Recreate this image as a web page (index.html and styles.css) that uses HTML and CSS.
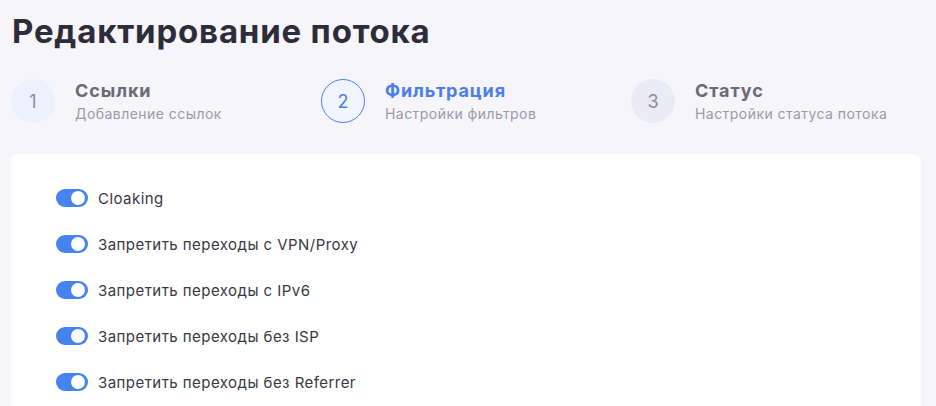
FILE: index.html
```html
<!DOCTYPE html>
<html lang="ru">
<head>
    <meta charset="UTF-8">
    <meta name="viewport" content="width=device-width, initial-scale=1.0">
    <title>Редактирование потока</title>
    <link rel="stylesheet" href="styles.css">
</head>
<body>
    <main class="page">
        <h1 class="page-title">Редактирование потока</h1>

        <div class="steps">
            <div class="step">
                <div class="step-num">1</div>
                <div class="step-text">
                    <div class="step-title">Ссылки</div>
                    <div class="step-sub">Добавление ссылок</div>
                </div>
            </div>
            <div class="step step-active">
                <div class="step-num">2</div>
                <div class="step-text">
                    <div class="step-title">Фильтрация</div>
                    <div class="step-sub">Настройки фильтров</div>
                </div>
            </div>
            <div class="step step-next">
                <div class="step-num">3</div>
                <div class="step-text">
                    <div class="step-title">Статус</div>
                    <div class="step-sub">Настройки статуса потока</div>
                </div>
            </div>
        </div>

        <section class="card">
            <label class="switch-row">
                <span class="switch"><span class="knob"></span></span>
                <span class="switch-label">Cloaking</span>
            </label>
            <label class="switch-row">
                <span class="switch"><span class="knob"></span></span>
                <span class="switch-label">Запретить переходы с VPN/Proxy</span>
            </label>
            <label class="switch-row">
                <span class="switch"><span class="knob"></span></span>
                <span class="switch-label">Запретить переходы с IPv6</span>
            </label>
            <label class="switch-row">
                <span class="switch"><span class="knob"></span></span>
                <span class="switch-label">Запретить переходы без ISP</span>
            </label>
            <label class="switch-row">
                <span class="switch"><span class="knob"></span></span>
                <span class="switch-label">Запретить переходы без Referrer</span>
            </label>
        </section>
    </main>
</body>
</html>
```

FILE: styles.css
```css
body {
    margin: 0;
    padding: 0;
    height: 406px;
    background-color: #f5f5fa;
    color: #35323f;
    font-family: Inter, "Noto Sans", sans-serif;
    overflow: hidden;
}
.page {
    padding: 0 15px 0 11px;
}
.page-title {
    margin: 0;
    padding: 11px 0 0 1px;
    font-size: 33px;
    font-weight: 700;
    line-height: 40px;
    color: #2f2c3a;
    letter-spacing: 0.8px;
}
.steps {
    display: grid;
    grid-template-columns: 310px 310px 310px;
    margin-top: 28px;
}
.step {
    display: flex;
    align-items: center;
    gap: 20px;
}
.step-num {
    width: 44px;
    height: 44px;
    border-radius: 50%;
    background-color: #ebf1fd;
    color: #8c8c99;
    font-size: 18px;
    display: flex;
    align-items: center;
    justify-content: center;
    box-sizing: border-box;
}
.step-title {
    font-size: 18px;
    font-weight: 700;
    color: #6c6a77;
    line-height: 22px;
    letter-spacing: 0.9px;
}
.step-sub {
    font-size: 14px;
    color: #9c9aa7;
    margin-top: 3px;
    line-height: 18px;
    letter-spacing: 0.45px;
}
.step-active .step-num {
    background-color: #f1f5ff;
    border: 1px solid #4a84f0;
    color: #4a7ded;
}
.step-active .step-title {
    color: #4a7ded;
}
.step-next .step-num {
    background-color: #ebebf5;
}
.card {
    margin-top: 31px;
    background: white;
    border-radius: 6px;
    padding: 35px 45px 0;
    height: 290px;
    box-sizing: border-box;
}
.switch-row {
    display: flex;
    align-items: center;
    gap: 10px;
    height: 18px;
    margin-bottom: 28px;
}
.switch {
    width: 32px;
    height: 18px;
    border-radius: 9px;
    background-color: #4583ee;
    position: relative;
    flex: none;
}
.knob {
    position: absolute;
    top: 2px;
    right: 3px;
    width: 14px;
    height: 14px;
    border-radius: 50%;
    background: white;
}
.switch-label {
    font-size: 15px;
    color: #3a3744;
    letter-spacing: 0.45px;
}
```
